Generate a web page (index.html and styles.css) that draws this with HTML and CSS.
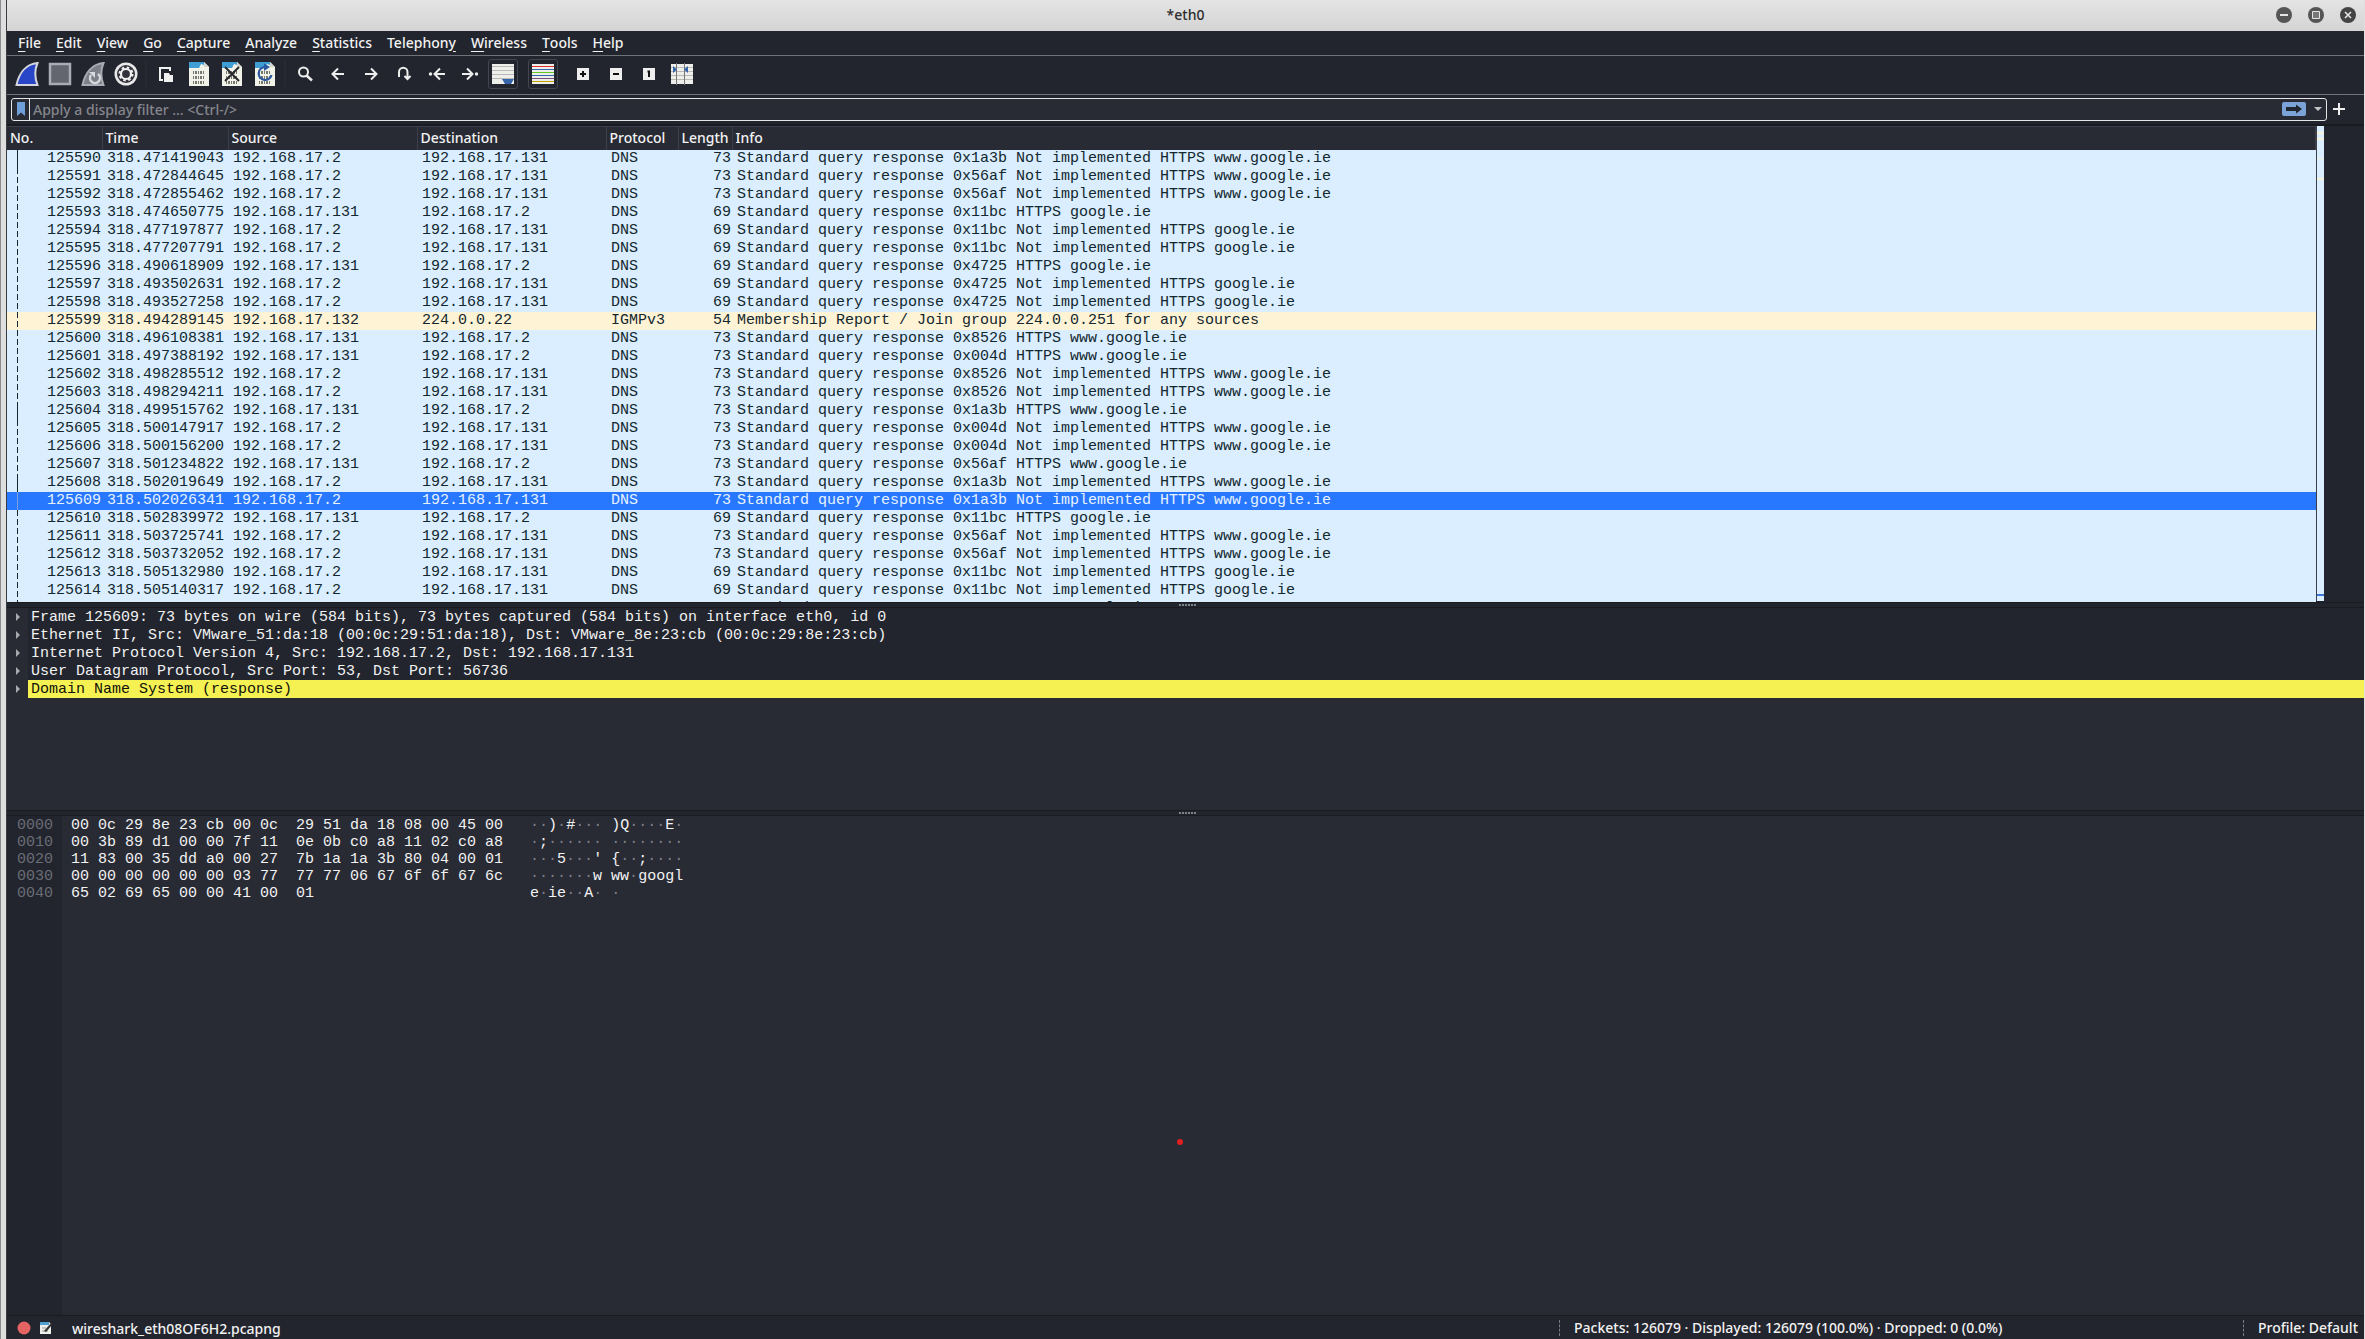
FILE: index.html
```html
<!DOCTYPE html>
<html lang="en">
<head>
  <meta charset="UTF-8" />
  <title>*eth0</title>
  <meta name="viewport" content="width=device-width, initial-scale=1.0" />
  <link rel="stylesheet" href="styles.css">
</head>
<body>
  <div class="window">
    <header class="titlebar">
      <span class="title">*eth0</span>
      <div class="win-buttons">
        <button aria-label="Minimize"><svg width="16" height="16" viewBox="0 0 16 16"><circle cx="8" cy="8" r="8" fill="#555"/><path d="M4 8h8" stroke="#e4e4e4" stroke-width="2"/></svg></button>
        <button aria-label="Maximize"><svg width="16" height="16" viewBox="0 0 16 16"><circle cx="8" cy="8" r="8" fill="#555"/><path d="M4.500 4.500h7v7h-7z" fill="#777" stroke="#e4e4e4"/></svg></button>
        <button aria-label="Close"><svg width="16" height="16" viewBox="0 0 16 16"><circle cx="8" cy="8" r="8" fill="#444"/><path d="M5 5l6 6M11 5l-6 6" stroke="#e4e4e4" stroke-width="1.600"/></svg></button>
      </div>
    </header>

    <nav class="menubar">
      <button><u>F</u>ile</button>
      <button><u>E</u>dit</button>
      <button><u>V</u>iew</button>
      <button><u>G</u>o</button>
      <button><u>C</u>apture</button>
      <button><u>A</u>nalyze</button>
      <button><u>S</u>tatistics</button>
      <button>Telephon<u>y</u></button>
      <button><u>W</u>ireless</button>
      <button><u>T</u>ools</button>
      <button><u>H</u>elp</button>
    </nav>

    <div class="toolbar">
      <button aria-label="Start capture"><svg width="24" height="24" viewBox="0 0 24 24"><path d="M1.500 23C4 11 11 2 22.500 1 19.500 8 19.500 15 22.500 23z" fill="#2a46c8" stroke="#d4d6dc" stroke-width="2"/></svg></button>
      <button aria-label="Stop capture"><svg width="24" height="24" viewBox="0 0 24 24"><path d="M2 2h20v20H2z" fill="#63666e" stroke="#a9acb4" stroke-width="2.500"/></svg></button>
      <button aria-label="Restart capture"><svg width="24" height="24" viewBox="0 0 24 24"><path d="M1.500 23C4 11 11 2 22.500 1 19.500 8 19.500 15 22.500 23z" fill="#7d8088" stroke="#a9acb4" stroke-width="2"/><path d="M10 13a5 5 0 1 0 7-1" fill="none" stroke="#d6d8dc" stroke-width="2.500"/><path d="M8 10h6v6z" fill="#d6d8dc"/></svg></button>
      <button aria-label="Capture options"><svg width="24" height="24" viewBox="0 0 24 24"><circle cx="12" cy="12" r="11.500" fill="#e9e9ea"/><circle cx="12" cy="12" r="9" fill="#33343b"/><circle cx="12" cy="12" r="5" fill="none" stroke="#f1f1f1" stroke-width="2.200"/><circle cx="12" cy="12" r="6.500" fill="none" stroke="#f1f1f1" stroke-width="2" stroke-dasharray="2.500 2.600"/></svg></button>
      <span class="sep"></span>
      <button aria-label="Open"><svg width="24" height="24" viewBox="0 0 24 24"><path d="M9 18H6V6h10v3" fill="none" stroke="#f0f0f0" stroke-width="2"/><path d="M10 11h5l1 2h3v7h-9z" fill="#f0f0f0"/></svg></button>
      <button aria-label="Save"><svg width="24" height="24" viewBox="0 0 24 24"><use href="#doc"/></svg></button>
      <button aria-label="Close file"><svg width="24" height="24" viewBox="0 0 24 24"><use href="#doc"/><path d="M5 5l14 14M19 5L5 19" stroke="#26282c" stroke-width="2"/></svg></button>
      <button aria-label="Reload file"><svg width="24" height="24" viewBox="0 0 24 24"><use href="#doc"/><path d="M12 5a6.500 6.500 0 1 0 6.500 8" fill="none" stroke="#2b58a0" stroke-width="2.200"/><path d="M11 1.500l6 3.500-6 4z" fill="#2b58a0"/></svg></button>
      <span class="sep"></span>
      <button aria-label="Find packet"><svg width="24" height="24" viewBox="0 0 24 24"><circle cx="10.500" cy="10" r="4.500" fill="none" stroke="#eee" stroke-width="2"/><path d="M13.500 13.500l5.500 5" stroke="#eee" stroke-width="2.500"/></svg></button>
      <button aria-label="Previous packet"><svg width="24" height="24" viewBox="0 0 24 24"><path d="M18 12H7M12 6.500L6.500 12l5.500 5.500" class="arrow"/></svg></button>
      <button aria-label="Next packet"><svg width="24" height="24" viewBox="0 0 24 24"><path d="M6 12h11M12 6.500l5.500 5.500-5.500 5.500" class="arrow"/></svg></button>
      <button aria-label="Go to packet"><svg width="24" height="24" viewBox="0 0 24 24"><path d="M7 15V10a4 4 0 0 1 8.500 0V16M12.500 14l3 3 3-3" class="arrow"/></svg></button>
      <button aria-label="First packet"><svg width="24" height="24" viewBox="0 0 24 24"><path d="M20 12H11M15 6.500L9.500 12l5.500 5.500" class="arrow"/><circle cx="5.500" cy="12" r="1.700" fill="#eee"/></svg></button>
      <button aria-label="Last packet"><svg width="24" height="24" viewBox="0 0 24 24"><path d="M4 12h9M9 6.500l5.500 5.500L9 17.500" class="arrow"/><circle cx="18.500" cy="12" r="1.700" fill="#eee"/></svg></button>
      <button class="checked" aria-label="Auto scroll"><svg width="24" height="24" viewBox="0 0 24 24"><path d="M1 2h22v20H1z" fill="#eeeeea"/><path d="M1 4.500h22M1 8.500h22M1 12.500h22M1 16.500h22" stroke="#b9bab5"/><path d="M11 17h12l-3 5h-6z" fill="#3566ab"/></svg></button>
      <button class="checked" aria-label="Colorize"><svg width="24" height="24" viewBox="0 0 24 24"><path d="M1 2h22v20H1z" fill="#eeeeea"/><path d="M1 4.500h22" stroke="#e03030"/><path d="M1 7.500h22" stroke="#3566ab"/><path d="M1 10.500h22" stroke="#60c822"/><path d="M1 13.500h22" stroke="#3566ab"/><path d="M1 16.500h22" stroke="#75507b"/><path d="M1 19.500h22" stroke="#c4a000"/></svg></button>
      <button aria-label="Zoom in"><svg width="24" height="24" viewBox="0 0 24 24"><path d="M6 6h12v12H6z" fill="#eee"/><path d="M9 12h6M12 9v6" stroke="#111" stroke-width="2"/></svg></button>
      <button aria-label="Zoom out"><svg width="24" height="24" viewBox="0 0 24 24"><path d="M6 6h12v12H6z" fill="#eee"/><path d="M9 12h6" stroke="#111" stroke-width="2"/></svg></button>
      <button aria-label="Normal size"><svg width="24" height="24" viewBox="0 0 24 24"><path d="M6 6h12v12H6z" fill="#eee"/><path d="M10.500 9.500H12V15" fill="none" stroke="#111" stroke-width="2"/></svg></button>
      <button aria-label="Resize columns"><svg width="24" height="24" viewBox="0 0 24 24"><path d="M1 2h22v20H1z" fill="#eeeeea"/><path d="M1 5.500h22M1 9.500h22M1 13.500h22M1 17.500h22" stroke="#b9bab5"/><path d="M6.500 1v22M14.500 1v22" stroke="#777"/><path d="M3 4l4 3.500L3 11zM18 4l-4 3.500 4 3.500z" fill="#3566ab"/></svg></button>
    </div>

    <div class="filterbar">
      <div class="filterbox">
        <button class="bookmark" aria-label="Bookmarks"><svg width="8" height="14" viewBox="0 0 8 14"><path d="M0 0h8v14L4 10.500 0 14z" fill="#6f9fd8"/></svg></button>
        <input type="text" aria-label="Display filter" placeholder="Apply a display filter … &lt;Ctrl-/&gt;">
        <button aria-label="Apply filter"><svg width="24" height="14" viewBox="0 0 24 14"><rect width="24" height="14" rx="2" fill="#7ba3d8"/><path d="M4 5h10V2.500L20 7l-6 4.500V9H4z" fill="#20262f"/></svg></button>
        <button aria-label="Filter history"><svg width="8" height="4" viewBox="0 0 8 4"><path d="M0 0h8L4 4z" fill="#c4c5c8"/></svg></button>
      </div>
      <button aria-label="Add filter button"><svg width="12" height="12" viewBox="0 0 12 12"><path d="M6 0v12M0 6h12" stroke="#eee" stroke-width="2"/></svg></button>
    </div>

    <main>
      <section class="packets">
        <div class="packet-scroll">
          <table>
            <colgroup><col class="c-no"><col class="c-time"><col class="c-addr"><col class="c-addr"><col class="c-proto"><col class="c-len"><col></colgroup>
            <thead>
              <tr><th>No.</th><th>Time</th><th>Source</th><th>Destination</th><th>Protocol</th><th>Length</th><th>Info</th></tr>
            </thead>
            <tbody id="packetRows"></tbody>
          </table>
        </div>
        <div class="minimap"></div>
      </section>
      <div class="splitter"></div>
      <ul class="details">
        <li><span>Frame 125609: 73 bytes on wire (584 bits), 73 bytes captured (584 bits) on interface eth0, id 0</span></li>
        <li><span>Ethernet II, Src: VMware_51:da:18 (00:0c:29:51:da:18), Dst: VMware_8e:23:cb (00:0c:29:8e:23:cb)</span></li>
        <li><span>Internet Protocol Version 4, Src: 192.168.17.2, Dst: 192.168.17.131</span></li>
        <li><span>User Datagram Protocol, Src Port: 53, Dst Port: 56736</span></li>
        <li class="marked"><span>Domain Name System (response)</span></li>
      </ul>
      <div class="splitter"></div>
      <section class="hex">
        <pre class="offsets">0000
0010
0020
0030
0040</pre>
        <pre class="bytes">00 0c 29 8e 23 cb 00 0c  29 51 da 18 08 00 45 00
00 3b 89 d1 00 00 7f 11  0e 0b c0 a8 11 02 c0 a8
11 83 00 35 dd a0 00 27  7b 1a 1a 3b 80 04 00 01
00 00 00 00 00 00 03 77  77 77 06 67 6f 6f 67 6c
65 02 69 65 00 00 41 00  01</pre>
        <pre class="ascii" id="ascii">··)·#··· )Q····E·
·;······ ········
···5···' {··;····
·······w ww·googl
e·ie··A· ·</pre>
        <span class="pointer"></span>
      </section>
    </main>

    <footer class="statusbar">
      <button aria-label="Expert information"><svg width="14" height="14" viewBox="0 0 14 14"><circle cx="7" cy="7" r="6.500" fill="#e46464"/></svg></button>
      <button aria-label="Capture comment"><svg width="14" height="14" viewBox="0 0 14 14"><path d="M1 1h9l2 2v10H1z" fill="#eef0ea"/><path d="M1 1h9v3H1z" fill="#4f9fd0"/><path d="M3 7h4M3 10h6" stroke="#999"/><path d="M5 10l7-8 1.500 1.500L7 11z" fill="#333"/></svg></button>
      <span class="file">wireshark_eth08OF6H2.pcapng</span>
      <span class="counts">Packets: 126079 · Displayed: 126079 (100.0%) · Dropped: 0 (0.0%)</span>
      <span class="profile">Profile: Default</span>
    </footer>
  </div>

  <svg class="defs" width="0" height="0">
    <defs>
      <g id="doc">
        <path d="M2 0h15l5 5v19H2z" fill="#f2f3e8"/>
        <path d="M2 0h15v3l-3-1-2 4H2z" fill="#3f9fd4"/>
        <path d="M17 0l5 5h-5z" fill="#d3d6cc"/>
        <path d="M6 10.500h12M6 15.500h12M6 20.500h12" stroke="#77786f" stroke-width="3" stroke-dasharray="1 1 2 1"/>
      </g>
    </defs>
  </svg>

  <script src="script.js"></script>
</body>
</html>
```
FILE: styles.css
```css
:root {
  --panel: #22252e;
  --base: #282a34;
  --edge: #191b21;
  --text: #f2f2f2;
  --ui: "Noto Sans", "Open Sans", sans-serif;
  --mono: "Liberation Mono", "Courier New", monospace;
}

* {
  box-sizing: border-box;
}

body {
  margin: 0;
  height: 100vh;
  background: #dedede;
  border-left: 1px solid #8a8c90;
  padding: 0 1px 0 5px;
  font-family: var(--ui);
  font-size: 14px;
  font-weight: 500;
  color: var(--text);
  overflow: hidden;
}

button {
  display: flex;
  align-items: center;
  justify-content: center;
  padding: 0;
  border: none;
  background: none;
  color: inherit;
  font: inherit;
}

pre, ul {
  margin: 0;
  padding: 0;
}

.defs {
  position: absolute;
}

.window {
  height: 100%;
  display: flex;
  flex-direction: column;
  border-left: 1px solid #3a3c42;
  background: var(--panel);
}

.titlebar {
  display: grid;
  grid-template-columns: 1fr auto 1fr;
  align-items: center;
  height: 31px;
  padding: 0 8px 2px;
  background: linear-gradient(#e4e4e4, #d4d4d4);
  color: #2c2c2c;
}

.title {
  grid-column: 2;
}

.win-buttons {
  display: flex;
  justify-content: flex-end;
  gap: 16px;
}

.menubar {
  display: flex;
  gap: 15px;
  height: 25px;
  padding: 0 11px 2px;
  border-bottom: 1px solid #70727a;
}

.menubar u {
  text-underline-offset: 3px;
}

.toolbar {
  display: flex;
  align-items: center;
  gap: 3px;
  height: 39px;
  padding: 0 5px 2px;
  border-bottom: 1px solid #70727a;
}

.toolbar button {
  width: 30px;
  height: 30px;
}

.toolbar .checked {
  margin-right: 7px;
  border: 1px solid #43464f;
  border-radius: 3px;
}

.toolbar .sep {
  width: 2px;
  height: 26px;
  margin: 0 1px;
  background: #272a32;
}

.arrow {
  fill: none;
  stroke: #eee;
  stroke-width: 2;
}

.filterbar {
  display: flex;
  align-items: center;
  gap: 6px;
  height: 31px;
  padding: 0 19px 1px 4px;
  border-bottom: 2px solid var(--edge);
}

.filterbox {
  flex: 1;
  display: flex;
  align-items: center;
  gap: 8px;
  height: 23px;
  padding-right: 4px;
  border: 1px solid #e6e6e6;
  border-radius: 3px;
  background: var(--base);
}

.filterbox .bookmark {
  width: 18px;
  height: 21px;
  border-right: 1px solid #e6e6e6;
}

.filterbox input {
  flex: 1;
  padding: 0;
  margin-left: -5px;
  border: none;
  outline: none;
  background: none;
  color: var(--text);
  font: inherit;
}

.filterbox input::placeholder {
  color: #85868c;
}

main {
  flex: 1;
  min-height: 0;
  display: flex;
  flex-direction: column;
  font-family: var(--mono);
  font-size: 15px;
  font-weight: 400;
  line-height: 18px;
}

.packets {
  display: flex;
  height: 476px;
  padding-right: 40px;
}

.packet-scroll {
  flex: 1;
  overflow: hidden;
  background: #daeeff;
}

table {
  width: 100%;
  table-layout: fixed;
  border-collapse: collapse;
  color: #12272e;
}

.c-no { width: 95px; }
.c-time { width: 126px; }
.c-addr { width: 189px; }
.c-proto { width: 72px; }
.c-len { width: 54px; }

th {
  height: 23px;
  padding: 0 0 0 3px;
  border-right: 1px solid #3c3f49;
  border-top: 1px solid #3c3f49;
  background: var(--base);
  color: var(--text);
  font: 500 14px/20px var(--ui);
  text-align: left;
}

td {
  height: 18px;
  padding: 0 0 0 5px;
  white-space: pre;
}

td:nth-child(1),
td:nth-child(6) {
  padding: 0 1px 0 0;
  text-align: right;
}

/* conversation line in the first column */
td:nth-child(1) {
  background: repeating-linear-gradient(#12272e 0 6px, transparent 6px 9px) 10px 0 / 1px 100% no-repeat;
}

.related td:nth-child(1) {
  background: linear-gradient(#12272e, #12272e) 10px 0 / 1px 100% no-repeat;
}

.selected td:nth-child(1) {
  background: linear-gradient(#7f9fd8, #7f9fd8) 10px 0 / 1px 100% no-repeat;
}

.igmp {
  background: #fff3d6;
}

.selected {
  background: #2777ff;
  color: #e8f3ff;
}

.minimap {
  width: 8px;
  margin-bottom: 1px;
  border-left: 1px solid #3c3f49;
  background:
    linear-gradient(#3c74d8, #3c74d8) 0 468px / 100% 2px no-repeat,
    linear-gradient(#f5f3d8, #f5f3d8) 0 6px / 100% 2px no-repeat,
    linear-gradient(#f5f3d8, #f5f3d8) 0 12px / 100% 2px no-repeat,
    linear-gradient(#f5f3d8, #f5f3d8) 0 32px / 100% 1px no-repeat,
    linear-gradient(#f5f3d8, #f5f3d8) 0 52px / 100% 2px no-repeat,
    #daeeff;
}

.splitter {
  display: flex;
  align-items: center;
  justify-content: center;
  height: 6px;
  padding-left: 4px;
  border-top: 1px solid var(--edge);
  border-bottom: 1px solid var(--edge);
}

.splitter::after {
  content: "";
  width: 17px;
  height: 2px;
  background: repeating-linear-gradient(90deg, #80828a 0 2px, transparent 2px 3px);
}

.details {
  height: 202px;
  background: var(--base);
  list-style: none;
}

.details li {
  display: flex;
  align-items: center;
  height: 18px;
}

.details li::before {
  content: "";
  margin: 0 8px 0 9px;
  border: 4px solid transparent;
  border-left: 4px solid #a8a9ae;
  border-right: none;
}

.details span {
  flex: 1;
  height: 18px;
  padding-left: 3px;
  background: var(--panel);
  line-height: 20px;
}

.details .marked span {
  background: #f5f153;
  color: #12120a;
}

.hex {
  position: relative;
  flex: 1;
  display: flex;
  background: var(--base);
  line-height: 17px;
}

.hex pre {
  padding-top: 1px;
  font: inherit;
}

.hex .offsets {
  width: 55px;
  padding-left: 10px;
  background: var(--panel);
  color: #6b6d75;
}

.bytes {
  margin: 0 27px 0 9px;
}

.ascii .dot {
  color: #7d7f86;
}

/* free floating pointer over the byte view */
.pointer {
  position: absolute;
  left: calc(50% - 9px);
  top: 64.8%;
  width: 6px;
  height: 6px;
  border-radius: 50%;
  background: #e02020;
}

.statusbar {
  display: flex;
  align-items: center;
  gap: 8px;
  height: 24px;
  padding: 1px 6px 0 10px;
  border-top: 1px solid var(--edge);
}

.file {
  flex: 1;
  padding-left: 11px;
}

.counts,
.profile {
  padding-left: 14px;
  border-left: 1px dashed #777982;
  line-height: 16px;
}

.counts {
  width: 676px;
}
```
FILE: script.js
```js
const NI = "Not implemented ";
const WWW = "HTTPS www.google.ie";
const APEX = "HTTPS google.ie";

// time, last part of the source address, query id, name
const packets = [
  ["318.471419043", 2, "0x1a3b", WWW],
  ["318.472844645", 2, "0x56af", WWW],
  ["318.472855462", 2, "0x56af", WWW],
  ["318.474650775", 131, "0x11bc", APEX],
  ["318.477197877", 2, "0x11bc", APEX],
  ["318.477207791", 2, "0x11bc", APEX],
  ["318.490618909", 131, "0x4725", APEX],
  ["318.493502631", 2, "0x4725", APEX],
  ["318.493527258", 2, "0x4725", APEX],
  ["318.494289145", 132],
  ["318.496108381", 131, "0x8526", WWW],
  ["318.497388192", 131, "0x004d", WWW],
  ["318.498285512", 2, "0x8526", WWW],
  ["318.498294211", 2, "0x8526", WWW],
  ["318.499515762", 131, "0x1a3b", WWW],
  ["318.500147917", 2, "0x004d", WWW],
  ["318.500156200", 2, "0x004d", WWW],
  ["318.501234822", 131, "0x56af", WWW],
  ["318.502019649", 2, "0x1a3b", WWW],
  ["318.502026341", 2, "0x1a3b", WWW],
  ["318.502839972", 131, "0x11bc", APEX],
  ["318.503725741", 2, "0x56af", WWW],
  ["318.503732052", 2, "0x56af", WWW],
  ["318.505132980", 2, "0x11bc", APEX],
  ["318.505140317", 2, "0x11bc", APEX],
  ["318.506002715", 131, "0x4725", APEX]
];

function renderPackets() {
  let html = "";
  packets.forEach(([time, host, id, name], i) => {
    const no = 125590 + i;
    let cls = no === 125609 ? "selected" : id === "0x1a3b" ? "related" : "";
    let cells = [no, time, `192.168.17.${host}`];
    if (!id) {
      cls = "igmp";
      cells.push("224.0.0.22", "IGMPv3", 54, "Membership Report / Join group 224.0.0.251 for any sources");
    } else {
      cells.push(
        host === 2 ? "192.168.17.131" : "192.168.17.2",
        "DNS",
        name === WWW ? 73 : 69,
        `Standard query response ${id} ${host === 2 ? NI : ""}${name}`
      );
    }
    html += `<tr class="${cls}">${cells.map(c => `<td>${c}</td>`).join("")}</tr>`;
  });
  document.getElementById("packetRows").innerHTML = html;
}

// non printable bytes are drawn dimmed
function dimDots() {
  const ascii = document.getElementById("ascii");
  ascii.innerHTML = ascii.textContent.replace(/·+/g, '<span class="dot">$&</span>');
}

renderPackets();
dimDots();
```
